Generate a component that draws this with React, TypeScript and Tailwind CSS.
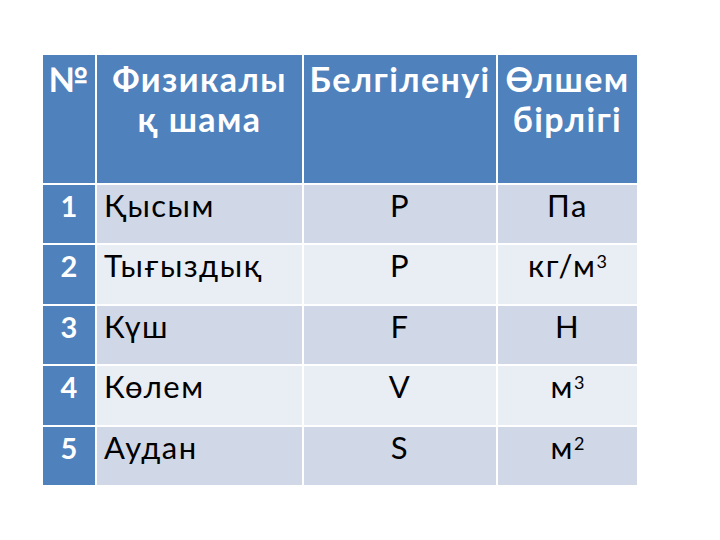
import React from "react";

const Sup = ({ c }: { c: string }) => (
  <span className="text-[18px] leading-none align-[9px] tracking-normal">{c}</span>
);

const rows: { n: string; name: string; sym: string; unit: React.ReactNode }[] = [
  { n: "1", name: "Қысым", sym: "Р", unit: "Па" },
  {
    n: "2",
    name: "Тығыздық",
    sym: "Р",
    unit: (
      <>
        кг/м<Sup c="3" />
      </>
    ),
  },
  { n: "3", name: "Күш", sym: "F", unit: "Н" },
  {
    n: "4",
    name: "Көлем",
    sym: "V",
    unit: (
      <>
        м<Sup c="3" />
      </>
    ),
  },
  {
    n: "5",
    name: "Аудан",
    sym: "S",
    unit: (
      <>
        м<Sup c="2" />
      </>
    ),
  },
];

const head = "bg-[#4f81bd] text-white font-bold text-[34px] leading-[40px] tracking-[1.4px] text-center pt-[4px]";

export default function App() {
  return (
    <div
      className="w-[720px] h-[540px] bg-white pt-[55px] pl-[43px]"
      style={{ fontFamily: "Lato, 'Noto Sans', sans-serif" }}
    >
      <div className="grid grid-cols-[52px_205px_192px_139px] grid-rows-[128px_repeat(5,58.4px)] gap-[2px] w-[594px]">
        <div className={head}>№</div>
        <div className={head}>
          Физикалы
          <br />қ шама
        </div>
        <div className={head}>Белгіленуі</div>
        <div className={head}>
          Өлшем
          <br />
          бірлігі
        </div>
        {rows.map((r, i) => {
          const bg = i % 2 === 0 ? "bg-[#d0d8e8]" : "bg-[#e9edf4]";
          return (
            <React.Fragment key={r.n}>
              <div className="bg-[#4f81bd] text-white font-bold text-[29px] leading-[36px] text-center pt-[3px]">{r.n}</div>
              <div className={`${bg} text-black text-[31px] leading-[36px] tracking-[1.5px] pl-[7px] pt-[2px]`}>{r.name}</div>
              <div className={`${bg} text-black text-[31px] leading-[36px] tracking-[1.5px] text-center pt-[2px]`}>{r.sym}</div>
              <div className={`${bg} text-black text-[31px] leading-[36px] tracking-[1.5px] text-center pt-[2px]`}>{r.unit}</div>
            </React.Fragment>
          );
        })}
      </div>
    </div>
  );
}
